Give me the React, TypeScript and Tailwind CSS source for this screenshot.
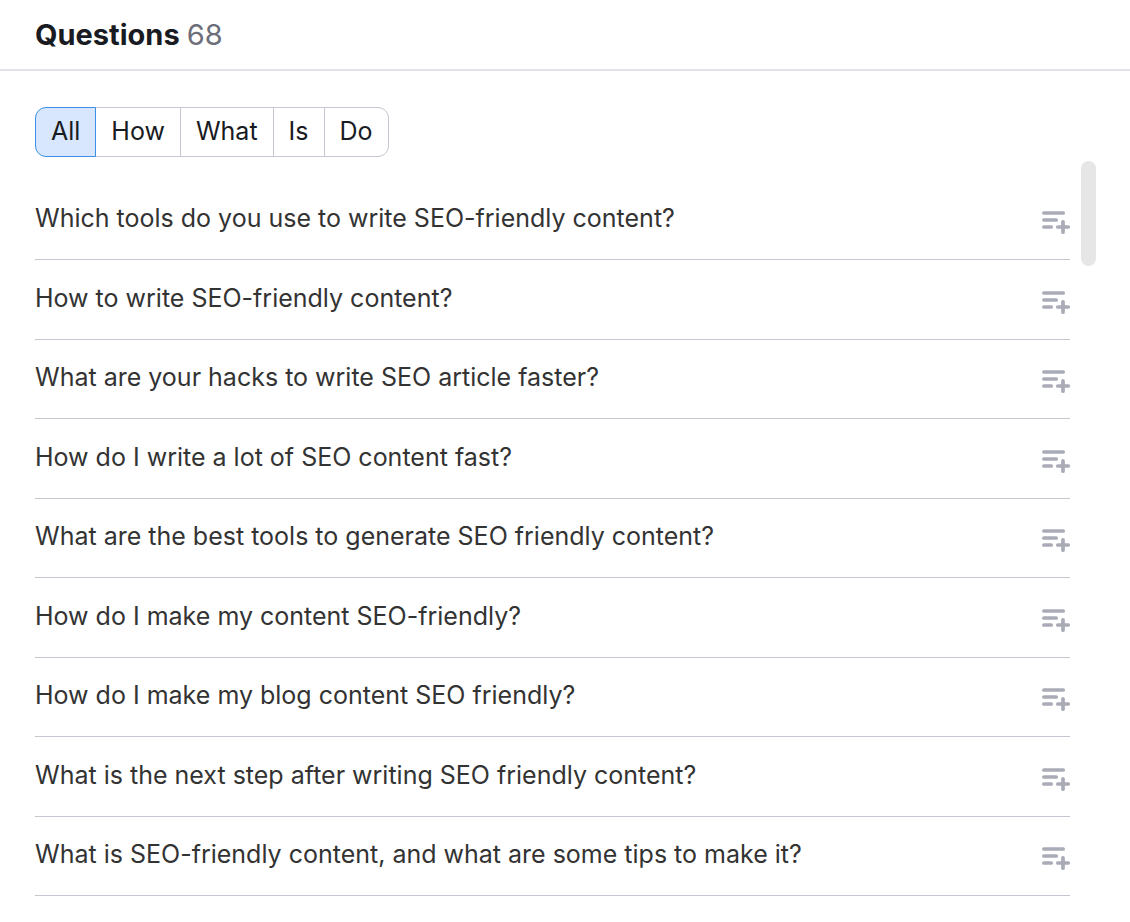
import { useState } from 'react';

const filters = ['All', 'How', 'What', 'Is', 'Do'];

const questions = [
  'Which tools do you use to write SEO-friendly content?',
  'How to write SEO-friendly content?',
  'What are your hacks to write SEO article faster?',
  'How do I write a lot of SEO content fast?',
  'What are the best tools to generate SEO friendly content?',
  'How do I make my content SEO-friendly?',
  'How do I make my blog content SEO friendly?',
  'What is the next step after writing SEO friendly content?',
  'What is SEO-friendly content, and what are some tips to make it?',
];

function AddToListIcon() {
  return (
    <svg width="28" height="24" viewBox="0 0 28 24" fill="none" stroke="#a9abb6" strokeWidth="3.7" strokeLinecap="round" aria-hidden="true">
      <path d="M1.9 2H21.2M1.9 9H14.2M1.9 16H9.2M21 10.8V21.2M15.8 16H26.2" />
    </svg>
  );
}

export default function App() {
  const [active, setActive] = useState('All');
  return (
    <main className="bg-white font-[Inter,sans-serif] text-[#191b23]">
      <header className="flex h-[71px] items-center gap-[7px] border-b-2 border-[#e0e1e9] px-[35px]">
        <h1 className="text-[29px] font-bold">Questions</h1>
        <span className="text-[29px] text-[#6c6e79]">68</span>
      </header>
      <div className="px-[35px] pt-9">
        <div role="group" aria-label="Question type" className="flex">
          {filters.map((f) => (
            <button
              key={f}
              type="button"
              aria-pressed={f === active}
              onClick={() => setActive(f)}
              className={
                'relative -ml-px h-[50px] border px-[15px] text-[25px] first:ml-0 first:rounded-l-[11px] last:rounded-r-[11px] ' +
                (f === active ? 'z-10 border-[#3b8eea] bg-[#d8e7fd]' : 'border-[#c4c7cf] bg-white')
              }
            >
              {f}
            </button>
          ))}
        </div>
      </div>
      <div className="flex justify-between gap-[11px] pt-1 pr-[34px] pl-[35px]">
        <ul className="flex-1 pt-5">
          {questions.map((q) => (
            <li key={q} className="flex min-h-[79px] items-center justify-between border-b border-[#c4c7cf] text-[25px] text-[#333] even:min-h-20">
              <span className="pb-0.5">{q}</span>
              <button type="button" aria-label={'Add question: ' + q} className="pt-1.5">
                <AddToListIcon />
              </button>
            </li>
          ))}
        </ul>
        <div className="h-[105px] w-[15px] rounded-lg bg-[#e6e6e6]" />
      </div>
    </main>
  );
}
